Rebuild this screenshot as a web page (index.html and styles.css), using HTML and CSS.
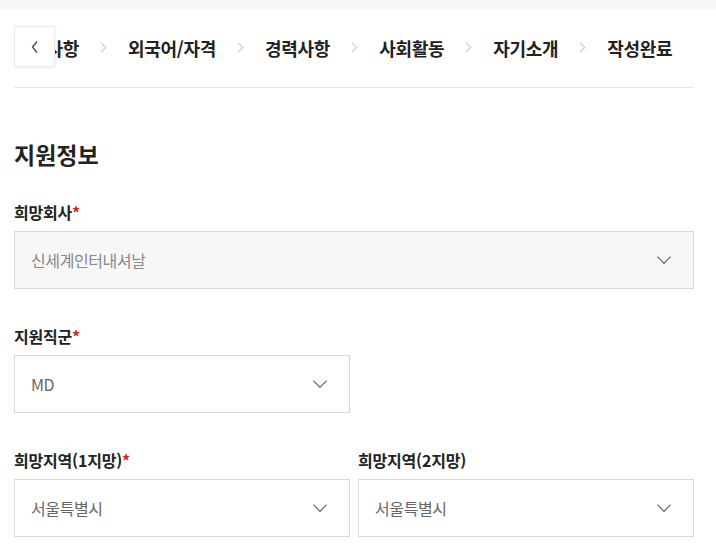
FILE: index.html
```html
<!DOCTYPE html>
<html lang="ko">

<head>
    <meta charset="UTF-8">
    <meta name="viewport" content="width=device-width, initial-scale=1.0">
    <title>지원서 작성</title>
    <link rel="stylesheet" href="styles.css">
</head>

<body>

    <div class="topBar"></div>

    <div class="page">
        <div class="steps">
            <button class="stepsPrev" type="button">
                <svg width="12" height="14" viewBox="0 0 12 14"><path d="M8 1.5 L3.5 7 L8 12.5" fill="none" stroke="#444" stroke-width="1.3"/></svg>
            </button>
            <div class="stepsTrack">
                <span class="step">학력사항</span>
                <span class="stepArrow"></span>
                <span class="step">외국어/자격</span>
                <span class="stepArrow"></span>
                <span class="step">경력사항</span>
                <span class="stepArrow"></span>
                <span class="step">사회활동</span>
                <span class="stepArrow"></span>
                <span class="step">자기소개</span>
                <span class="stepArrow"></span>
                <span class="step">작성완료</span>
            </div>
        </div>

        <h2 class="sectionTitle">지원정보</h2>

        <div class="field">
            <label class="fieldLabel">희망회사<em>*</em></label>
            <div class="select isDisabled">
                <span>신세계인터내셔날</span>
                <i class="selectArrow"></i>
            </div>
        </div>

        <div class="fieldRow">
            <div class="field">
                <label class="fieldLabel">지원직군<em>*</em></label>
                <div class="select">
                    <span>MD</span>
                    <i class="selectArrow"></i>
                </div>
            </div>
            <div class="field"></div>
        </div>

        <div class="fieldRow">
            <div class="field">
                <label class="fieldLabel">희망지역(1지망)<em>*</em></label>
                <div class="select">
                    <span>서울특별시</span>
                    <i class="selectArrow"></i>
                </div>
            </div>
            <div class="field">
                <label class="fieldLabel">희망지역(2지망)</label>
                <div class="select">
                    <span>서울특별시</span>
                    <i class="selectArrow"></i>
                </div>
            </div>
        </div>
    </div>

</body>

</html>
```

FILE: styles.css
```css
* {
    margin: 0;
    padding: 0;
    box-sizing: border-box;
}

html,
body {
    width: 100%;
    height: 100%;
    overflow: hidden;
}

body {
    font-family: "Noto Sans CJK KR", "Noto Sans", sans-serif;
    color: #222;
    background-color: #fff;
}

.topBar {
    height: 10px;
    background-color: #f7f7f7;
}

.page {
    padding: 0 22px 0 14px;
}

/* 단계 네비게이션 */
.steps {
    position: relative;
    height: 78px;
    padding-top: 16px;
    border-bottom: 1px solid #e5e5e5;
    overflow: hidden;
}

.stepsPrev {
    position: absolute;
    left: 0;
    top: 16px;
    z-index: 2;
    width: 41px;
    height: 41px;
    display: flex;
    justify-content: center;
    align-items: center;
    background-color: #fff;
    border: 1px solid #ebebeb;
    box-shadow: 0 1px 3px rgba(0, 0, 0, 0.08);
    cursor: pointer;
}

.stepsTrack {
    height: 43px;
    display: flex;
    align-items: center;
    white-space: nowrap;
}

.step {
    font-size: 18px;
    font-weight: 700;
    letter-spacing: -0.3px;
    color: #222;
}

.stepArrow {
    flex: none;
    width: 7px;
    height: 7px;
    margin: 0 23px 0 19px;
    border-top: 1px solid #c8c8c8;
    border-right: 1px solid #c8c8c8;
    transform: rotate(45deg);
}

.sectionTitle {
    margin-top: 50px;
    font-size: 23px;
    font-weight: 700;
    line-height: 32px;
}

/* 입력 항목 */
.field {
    flex: 1;
}

.sectionTitle + .field {
    margin-top: 32px;
}

.fieldRow {
    display: flex;
    gap: 8px;
}

.fieldRow .field {
    margin-top: 37px;
}

.fieldLabel {
    display: block;
    font-size: 16px;
    font-weight: 700;
    line-height: 20px;
    letter-spacing: -0.2px;
    margin-bottom: 9px;
}

.fieldLabel em {
    font-style: normal;
    color: #e0201b;
}

.select {
    height: 58px;
    display: flex;
    justify-content: space-between;
    align-items: center;
    padding: 0 24px 0 16px;
    border: 1px solid #d9d9d9;
    background-color: #fff;
    font-size: 16px;
    letter-spacing: -0.4px;
    color: #666;
}

.select.isDisabled {
    background-color: #f7f7f7;
    color: #888;
}

.selectArrow {
    width: 10px;
    height: 10px;
    margin-top: -6px;
    border-right: 1.2px solid #5a5a5a;
    border-bottom: 1.2px solid #5a5a5a;
    transform: rotate(45deg);
}
```
